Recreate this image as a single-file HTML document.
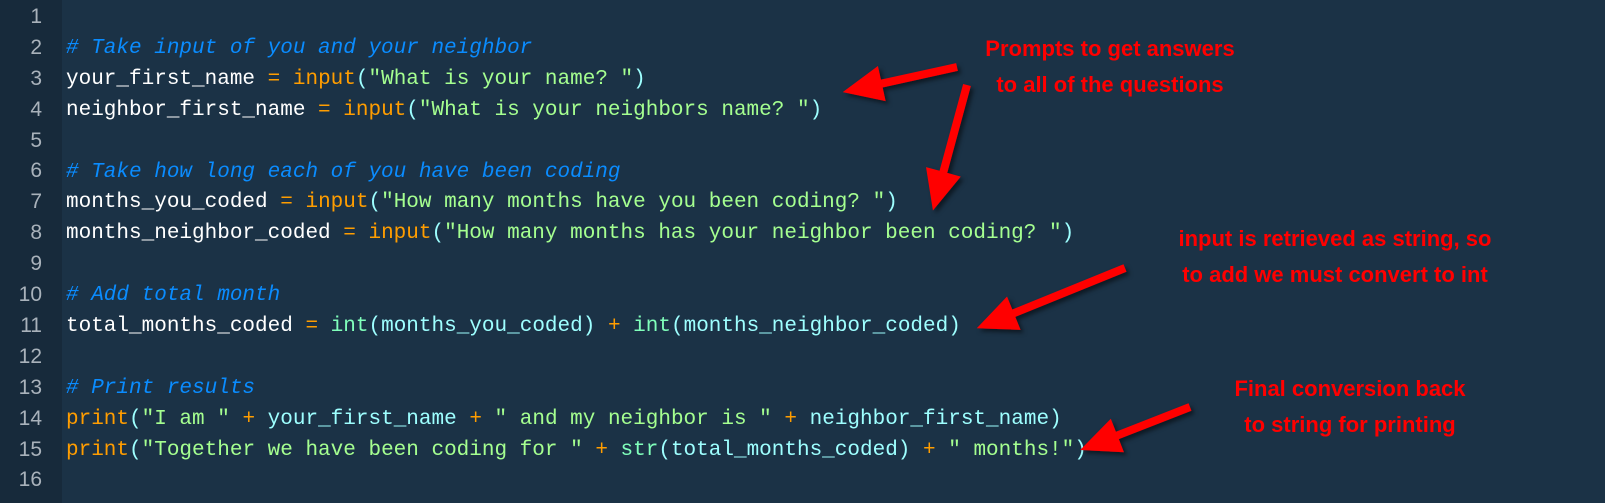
<!DOCTYPE html>
<html><head><meta charset="utf-8"><style>
body{margin:0;width:1605px;height:503px;background:#1b3246;overflow:hidden;position:relative;font-family:"Liberation Mono",monospace;}
#g{position:absolute;left:0;top:0;width:62px;height:503px;background:#172a3b;}
.ln{position:absolute;left:0;width:42px;text-align:right;color:#a9b2bb;font-family:"Liberation Sans",sans-serif;font-size:21px;}
#code{position:absolute;left:66px;top:3px;font-size:21px;line-height:30.9px;white-space:pre;color:#fff;}
.c{color:#0a8cff;font-style:italic}.o{color:#ff9d00}.s{color:#a5ff90}.p{color:#9effff}.f{color:#80ffbb}.v{color:#9effff}
.a{position:absolute;color:#ff0000;font-family:"Liberation Sans",sans-serif;font-weight:bold;font-size:22px;text-align:center;line-height:36px;}
</style></head><body>
<div id="g"></div>
<div class="ln" style="top:5px">1</div><div class="ln" style="top:36px">2</div><div class="ln" style="top:67px">3</div><div class="ln" style="top:98px">4</div><div class="ln" style="top:129px">5</div><div class="ln" style="top:159px">6</div><div class="ln" style="top:190px">7</div><div class="ln" style="top:221px">8</div><div class="ln" style="top:252px">9</div><div class="ln" style="top:283px">10</div><div class="ln" style="top:314px">11</div><div class="ln" style="top:345px">12</div><div class="ln" style="top:376px">13</div><div class="ln" style="top:407px">14</div><div class="ln" style="top:438px">15</div><div class="ln" style="top:468px">16</div>
<div id="code">
<span class="c"># Take input of you and your neighbor</span>
your_first_name <span class="o">=</span> <span class="o">input</span><span class="p">(</span><span class="s">"What is your name? "</span><span class="p">)</span>
neighbor_first_name <span class="o">=</span> <span class="o">input</span><span class="p">(</span><span class="s">"What is your neighbors name? "</span><span class="p">)</span>

<span class="c"># Take how long each of you have been coding</span>
months_you_coded <span class="o">=</span> <span class="o">input</span><span class="p">(</span><span class="s">"How many months have you been coding? "</span><span class="p">)</span>
months_neighbor_coded <span class="o">=</span> <span class="o">input</span><span class="p">(</span><span class="s">"How many months has your neighbor been coding? "</span><span class="p">)</span>

<span class="c"># Add total month</span>
total_months_coded <span class="o">=</span> <span class="f">int</span><span class="p">(</span><span class="v">months_you_coded</span><span class="p">)</span> <span class="o">+</span> <span class="f">int</span><span class="p">(</span><span class="v">months_neighbor_coded</span><span class="p">)</span>

<span class="c"># Print results</span>
<span class="o">print</span><span class="p">(</span><span class="s">"I am "</span> <span class="o">+</span> <span class="v">your_first_name</span> <span class="o">+</span> <span class="s">" and my neighbor is "</span> <span class="o">+</span> <span class="v">neighbor_first_name</span><span class="p">)</span>
<span class="o">print</span><span class="p">(</span><span class="s">"Together we have been coding for "</span> <span class="o">+</span> <span class="f">str</span><span class="p">(</span><span class="v">total_months_coded</span><span class="p">)</span> <span class="o">+</span> <span class="s">" months!"</span><span class="p">)</span>
</div>
<div class="a" style="left:930px;top:31px;width:360px">Prompts to get answers<br>to all of the questions</div>
<div class="a" style="left:1130px;top:221px;width:410px">input is retrieved as string, so<br>to add we must convert to int</div>
<div class="a" style="left:1190px;top:371px;width:320px">Final conversion back<br>to string for printing</div>
<svg width="1605" height="503" style="position:absolute;left:0;top:0">
<defs><filter id="sh" x="-20%" y="-20%" width="140%" height="140%"><feDropShadow dx="3" dy="3" stdDeviation="2" flood-color="#000" flood-opacity="0.5"/></filter></defs>
<g fill="#ff0000" filter="url(#sh)">
<polygon transform="translate(957,67) rotate(167.6)" points="0,-4 77,-4 77,-18 117,0 77,18 77,4 0,4"/>
<polygon transform="translate(967,85) rotate(105.2)" points="0,-4 90,-4 90,-18 130,0 90,18 90,4 0,4"/>
<polygon transform="translate(1125,268) rotate(157.9)" points="0,-4 120,-4 120,-18 160,0 120,18 120,4 0,4"/>
<polygon transform="translate(1190,407) rotate(158.6)" points="0,-4 78,-4 78,-18 118,0 78,18 78,4 0,4"/>
</g></svg>
</body></html>
